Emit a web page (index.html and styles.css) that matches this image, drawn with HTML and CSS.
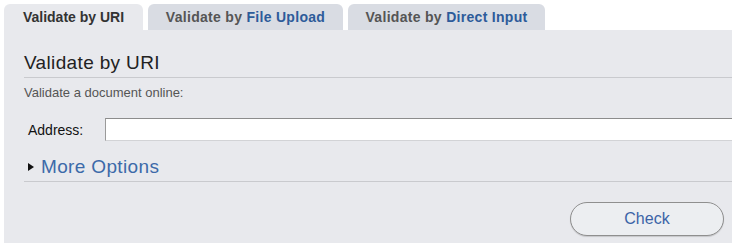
FILE: index.html
```html
<!DOCTYPE html>
<html lang="en">
  <head>
    <meta charset="UTF-8" />
    <meta name="viewport" content="width=device-width, initial-scale=1.0" />
    <title>Validate by URI</title>
    <link rel="stylesheet" href="styles.css">
  </head>
  <body>
    <div class="container">
      <ul class="tabs">
        <li class="tab tab-uri active">Validate by URI</li>
        <li class="tab tab-upload">Validate by <span class="hl">File Upload</span></li>
        <li class="tab tab-input">Validate by <span class="hl">Direct Input</span></li>
      </ul>

      <div class="panel">
        <h2>Validate by URI</h2>
        <p class="intro">Validate a document online:</p>

        <div class="field">
          <label for="uri">Address:</label>
          <input type="text" id="uri" class="address" />
        </div>

        <div class="more-options">More Options</div>

        <div class="actions">
          <button class="btn">Check</button>
        </div>
      </div>
    </div>
  </body>
</html>
```

FILE: styles.css
```css
* {
  margin: 0;
  padding: 0;
  box-sizing: border-box;
}

html,
body {
  overflow: hidden;
}

body {
  font-family: "Liberation Sans", Arial, sans-serif;
  background: #fff;
}

.container {
  padding: 4px 0 0 4px;
}

.tabs {
  display: flex;
  gap: 5px;
  list-style: none;
}

.tab {
  height: 26px;
  line-height: 26px;
  text-align: center;
  background: #d9dce3;
  border-radius: 6px 6px 0 0;
  font-size: 14px;
  font-weight: bold;
  letter-spacing: 0.3px;
  color: #555;
}

.tab-uri {
  width: 139px;
  letter-spacing: 0;
}

.tab-upload {
  width: 195px;
}

.tab-input {
  width: 197px;
}

.tab.active {
  background: #e8e9ed;
  color: #333;
}

.tab .hl {
  color: #2d5b9a;
}

.panel {
  background: #e8e9ed;
  padding: 22px 0 0 20px;
  height: 213px;
  overflow: hidden;
}

h2 {
  font-size: 19px;
  font-weight: normal;
  letter-spacing: 0.35px;
  line-height: 22px;
  color: #222;
  padding-bottom: 3px;
  border-bottom: 1px solid #c9cace;
}

.intro {
  margin-top: 7px;
  font-size: 13px;
  line-height: 16px;
  color: #555;
}

.field {
  display: flex;
  align-items: center;
  margin-top: 17px;
  padding-left: 4px;
}

.field label {
  width: 77px;
  font-size: 14px;
  color: #111;
}

.address {
  flex: 1;
  height: 23px;
  margin-right: -10px;
  background: #fff;
  border: 1px solid #d2d3d6;
  border-top-color: #8c8c8c;
  border-left-color: #9a9a9a;
  outline: none;
}

.more-options {
  margin-top: 15px;
  padding: 0 0 3px 17px;
  position: relative;
  font-size: 19px;
  letter-spacing: 0.35px;
  line-height: 22px;
  color: #3c6aa9;
  border-bottom: 1px solid #c9cace;
}

.more-options::before {
  content: "";
  position: absolute;
  left: 4px;
  top: 7px;
  border-style: solid;
  border-width: 4.5px 0 4.5px 6px;
  border-color: transparent transparent transparent #111;
}

.actions {
  display: flex;
  justify-content: flex-end;
  margin-top: 20px;
  padding-right: 8px;
}

.btn {
  width: 154px;
  height: 34px;
  border: 1px solid #8f8f8f;
  border-radius: 17px;
  background: #eceef1;
  box-shadow: 0 1px 1px rgba(0, 0, 0, 0.15);
  font-family: "Liberation Sans", Arial, sans-serif;
  font-size: 16px;
  color: #3b63a7;
}
```
